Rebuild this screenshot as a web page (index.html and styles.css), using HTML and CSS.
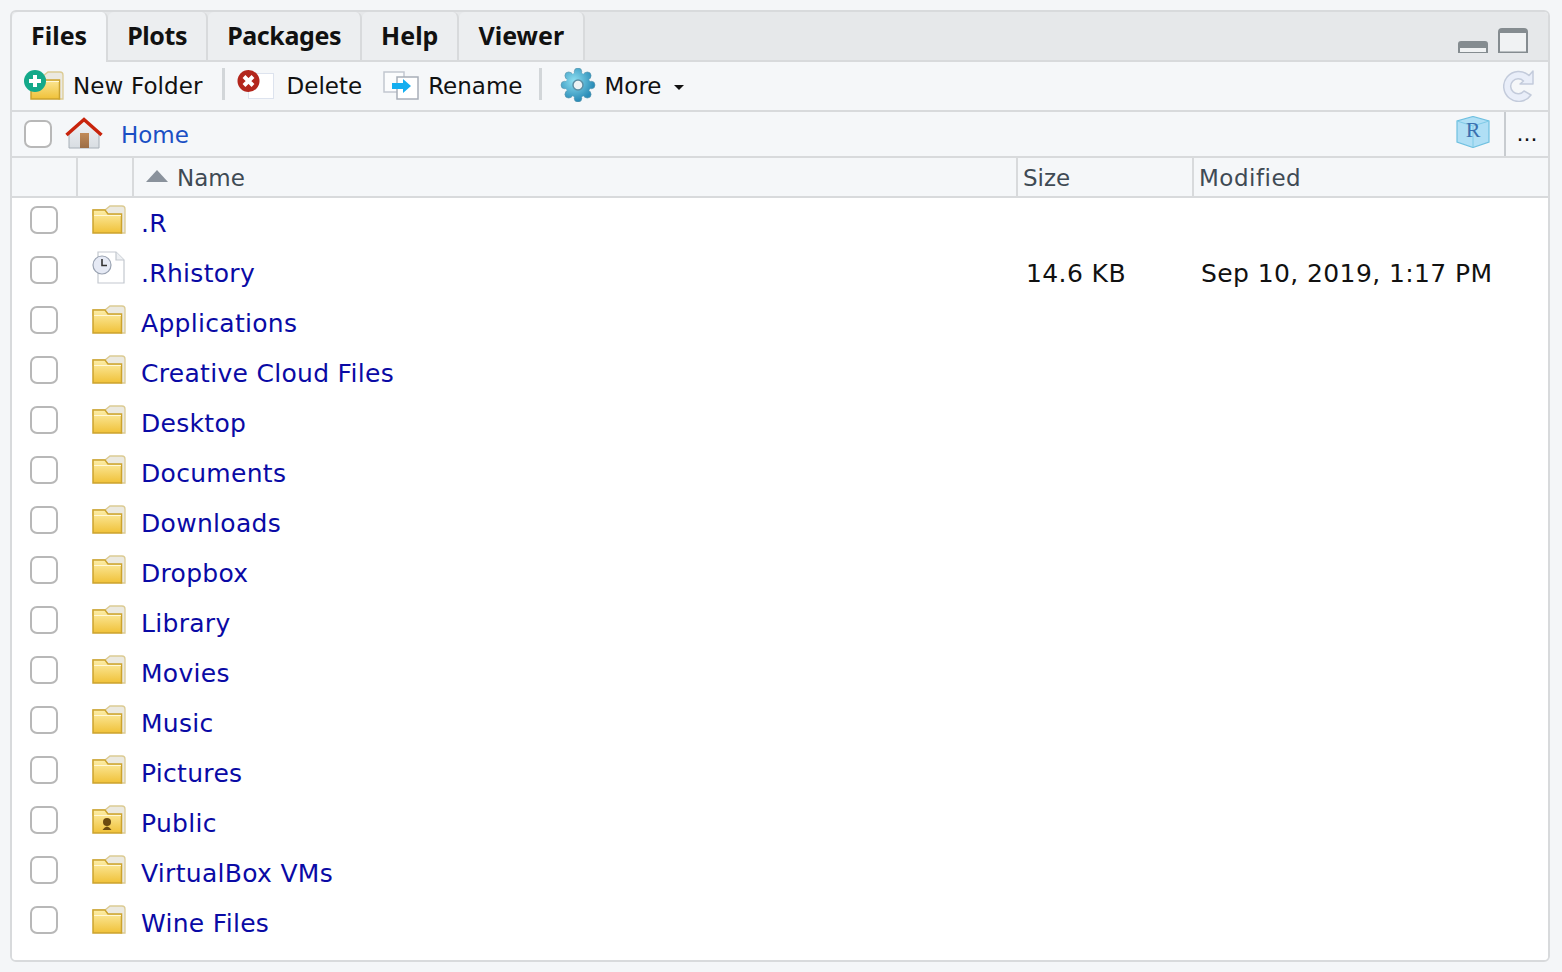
FILE: index.html
```html
<!DOCTYPE html>
<html lang="en">
<head>
    <meta charset="UTF-8">
    <title>Files</title>
    <link rel="stylesheet" href="styles.css">
</head>
<body>
    <svg class="defs" width="0" height="0">
        <defs>
            <linearGradient id="fold" x1="0" y1="0" x2="0" y2="1">
                <stop offset="0" stop-color="#fdeea8"/>
                <stop offset="1" stop-color="#f0c138"/>
            </linearGradient>
            <symbol id="folder" viewBox="0 0 34 29">
                <path d="M1 5 H13 L18 1 H30 Q33 1 33 4 V28 H29 V10 H1 Z" fill="#ebe9e0" stroke="#dccb92" stroke-width="1.3"/>
                <path d="M1 5 H13 L16 9 H29.500 V28 H1 Z" fill="url(#fold)" stroke="#cba32e" stroke-width="1.5"/>
                <path d="M2 10.500 H29" stroke="#fff8d8" stroke-width="1"/>
            </symbol>
        </defs>
    </svg>

    <div class="panel">
        <div class="tabs">
            <div class="tab active">Files</div>
            <div class="tab tab-tight">Plots</div>
            <div class="tab tab-tight">Packages</div>
            <div class="tab">Help</div>
            <div class="tab">Viewer</div>
            <div class="win-btns">
                <svg width="30" height="12" viewBox="0 0 30 12"><path d="M0 12 V3 Q0 0 3 0 H27 Q30 0 30 3 V12 Z" fill="#858c90"/><rect x="2" y="7" width="26" height="4" fill="#f0f2f3"/></svg>
                <svg width="30" height="25" viewBox="0 0 30 25"><path d="M0 25 V4 Q0 0 4 0 H26 Q30 0 30 4 V25 Z" fill="#858c90"/><rect x="2" y="5" width="26" height="18.500" fill="#f0f2f3"/></svg>
            </div>
        </div>

        <div class="toolbar">
            <button class="tool tool-new">
                <svg width="42" height="30" viewBox="0 0 42 30">
                    <use href="#folder" x="6" y="1" width="34" height="29"/>
                    <circle cx="11" cy="11" r="11" fill="#14a98a"/>
                    <path d="M11 5 V17 M5 11 H17" stroke="#fff" stroke-width="4"/>
                </svg>
                New Folder
            </button>
            <span class="tool-sep sep-a"></span>
            <button class="tool tool-del">
                <svg width="38" height="30" viewBox="0 0 38 30">
                    <rect x="11.500" y="3.500" width="25" height="25" fill="#fff" stroke="#dde3ee" stroke-width="1"/>
                    <circle cx="11.500" cy="11" r="11" fill="#b3261c"/>
                    <path d="M7 6.500 L16 15.500 M16 6.500 L7 15.500" stroke="#fff" stroke-width="4"/>
                </svg>
                Delete
            </button>
            <button class="tool tool-ren">
                <svg width="36" height="30" viewBox="0 0 36 30">
                    <rect x="1" y="2" width="20" height="20" fill="#fbfcfd" stroke="#c2c7d0" stroke-width="1.5"/>
                    <rect x="14" y="7" width="21" height="22" fill="#fff" stroke="#a8aeb8" stroke-width="1.5"/>
                    <path d="M9 13 H20 V9 L28 16 L20 23 V19 H9 Z" fill="#14aef0"/>
                </svg>
                Rename
            </button>
            <span class="tool-sep sep-b"></span>
            <button class="tool tool-more">
                <svg width="36" height="34" viewBox="0 0 36 34">
                    <defs>
                        <radialGradient id="gear" gradientUnits="userSpaceOnUse" cx="14" cy="13" r="20">
                            <stop offset="0" stop-color="#8fe0f2"/>
                            <stop offset="1" stop-color="#2b8db8"/>
                        </radialGradient>
                    </defs>
                    <g fill="url(#gear)" stroke="#5a93ab" stroke-width="0.6">
                        <circle cx="18" cy="3.800" r="3.800"/>
                        <circle cx="18" cy="30.200" r="3.800"/>
                        <circle cx="4.800" cy="17" r="3.800"/>
                        <circle cx="31.200" cy="17" r="3.800"/>
                        <circle cx="8.700" cy="7.700" r="3.800"/>
                        <circle cx="27.300" cy="7.700" r="3.800"/>
                        <circle cx="8.700" cy="26.300" r="3.800"/>
                        <circle cx="27.300" cy="26.300" r="3.800"/>
                    </g>
                    <circle cx="18" cy="17" r="12.500" fill="url(#gear)"/>
                    <circle cx="18" cy="17" r="5" fill="#eef2f4" stroke="#5d8ea4" stroke-width="1.500"/>
                </svg>
                More
                <span class="caret"></span>
            </button>
            <svg class="refresh" width="32" height="32" viewBox="0 0 32 32">
                <path d="M30 1 V14 H17 L20.500 11 A7.500 7.500 0 1 0 21 21 L28 25 A15 15 0 1 1 26 5.500 Z" fill="#e9eef9" stroke="#c3cbdb" stroke-width="1.500" stroke-linejoin="round"/>
            </svg>
        </div>

        <div class="pathbar">
            <span class="check"></span>
            <svg class="house" width="38" height="34" viewBox="0 0 38 34">
                <defs>
                    <linearGradient id="wall" x1="0" y1="0" x2="0" y2="1">
                        <stop offset="0" stop-color="#f2f4f6"/>
                        <stop offset="1" stop-color="#d8dde2"/>
                    </linearGradient>
                    <linearGradient id="door" x1="0" y1="0" x2="0" y2="1">
                        <stop offset="0" stop-color="#c08a58"/>
                        <stop offset="1" stop-color="#9c6e46"/>
                    </linearGradient>
                </defs>
                <path d="M4 15 L19 2 L34 15 V31 H4 Z" fill="url(#wall)" stroke="#a8b0b8" stroke-width="1"/>
                <rect x="15" y="16" width="9" height="15" fill="url(#door)"/>
                <path d="M1.500 18 L19 2.500 L36.500 18" fill="none" stroke="#c8240c" stroke-width="3.500"/>
            </svg>
            <a class="home-link">Home</a>
            <svg class="rcube" width="34" height="32" viewBox="0 0 34 32">
                <path d="M17 0.500 L33 5 V26 L17 31.500 L1 26 V5 Z" fill="#b0dff5" stroke="#6fc0e0" stroke-width="1.200"/>
                <path d="M1 5 L17 10 L33 5 M17 10 V31" fill="none" stroke="#7fcae6" stroke-width="1"/>
                <text x="17" y="21" class="rcube-r">R</text>
            </svg>
            <span class="path-more">...</span>
        </div>

        <div class="thead">
            <div class="th"></div>
            <div class="th"></div>
            <div class="th th-name"><span class="sort-up"></span>Name</div>
            <div class="th th-size">Size</div>
            <div class="th th-mod">Modified</div>
        </div>

        <div class="rows">
            <div class="row"><span class="check"></span><svg class="ficon"><use href="#folder"/></svg><a class="fname">.R</a></div>
            <div class="row">
                <span class="check"></span>
                <svg class="ficon ficon-hist" viewBox="0 0 34 33">
                    <path d="M6 1 H24 L32 9 V32 H6 Z" fill="#fff" stroke="#c3c8cf" stroke-width="1.200"/>
                    <path d="M24 1 V9 H32" fill="#eef0f3" stroke="#c3c8cf" stroke-width="1.200"/>
                    <circle cx="10" cy="14" r="9" fill="#e6eaf5" stroke="#9aa3b2" stroke-width="1.200"/>
                    <path d="M10 8 V14.500 H15" fill="none" stroke="#333" stroke-width="1.600"/>
                </svg>
                <a class="fname">.Rhistory</a>
                <span class="fsize">14.6 KB</span>
                <span class="fmod">Sep 10, 2019, 1:17 PM</span>
            </div>
            <div class="row"><span class="check"></span><svg class="ficon"><use href="#folder"/></svg><a class="fname">Applications</a></div>
            <div class="row"><span class="check"></span><svg class="ficon"><use href="#folder"/></svg><a class="fname">Creative Cloud Files</a></div>
            <div class="row"><span class="check"></span><svg class="ficon"><use href="#folder"/></svg><a class="fname">Desktop</a></div>
            <div class="row"><span class="check"></span><svg class="ficon"><use href="#folder"/></svg><a class="fname">Documents</a></div>
            <div class="row"><span class="check"></span><svg class="ficon"><use href="#folder"/></svg><a class="fname">Downloads</a></div>
            <div class="row"><span class="check"></span><svg class="ficon"><use href="#folder"/></svg><a class="fname">Dropbox</a></div>
            <div class="row"><span class="check"></span><svg class="ficon"><use href="#folder"/></svg><a class="fname">Library</a></div>
            <div class="row"><span class="check"></span><svg class="ficon"><use href="#folder"/></svg><a class="fname">Movies</a></div>
            <div class="row"><span class="check"></span><svg class="ficon"><use href="#folder"/></svg><a class="fname">Music</a></div>
            <div class="row"><span class="check"></span><svg class="ficon"><use href="#folder"/></svg><a class="fname">Pictures</a></div>
            <div class="row">
                <span class="check"></span>
                <svg class="ficon" viewBox="0 0 34 29">
                    <use href="#folder" width="34" height="29"/>
                    <circle cx="15" cy="17" r="4" fill="#6b4a10"/>
                    <path d="M10.500 25 Q15 18 19.500 25 Z" fill="#6b4a10"/>
                </svg>
                <a class="fname">Public</a>
            </div>
            <div class="row"><span class="check"></span><svg class="ficon"><use href="#folder"/></svg><a class="fname">VirtualBox VMs</a></div>
            <div class="row"><span class="check"></span><svg class="ficon"><use href="#folder"/></svg><a class="fname">Wine Files</a></div>
        </div>
    </div>
</body>
</html>
```

FILE: styles.css
```css
* {
    box-sizing: border-box;
}

body {
    margin: 0;
    padding: 10px 12px 10px 10px;
    height: 972px;
    overflow: hidden;
    background-color: #f4f6f8;
    font-family: "DejaVu Sans", "Liberation Sans", sans-serif;
    font-size: 23px;
    color: #111;
}

.defs {
    position: absolute;
}

.panel {
    height: 952px;
    border: 2px solid #d8dadc;
    border-radius: 6px;
    display: flex;
    flex-direction: column;
    background-color: #fff;
    overflow: hidden;
}

.tabs {
    height: 50px;
    display: flex;
    align-items: flex-start;
    background-color: #e6e8ea;
    border-bottom: 2px solid #d8dadc;
    font-family: "Noto Sans", sans-serif;
    font-size: 25px;
    font-weight: bold;
}

.tab {
    height: 48px;
    padding: 0 19px 3px;
    display: flex;
    align-items: center;
    background-color: #eceef0;
    border-right: 2px solid #d8dadc;
    border-radius: 6px 6px 0 0;
}

.tab-tight {
    letter-spacing: -0.4px;
}

.tab.active {
    height: 50px;
    padding-bottom: 5px;
    position: relative;
    background-color: #f5f7f9;
}

.win-btns {
    margin-left: auto;
    align-self: stretch;
    display: flex;
    align-items: flex-end;
    gap: 10px;
    padding: 0 20px 7px 0;
}

.toolbar {
    height: 50px;
    display: flex;
    align-items: center;
    background-color: #f5f7f9;
    border-bottom: 2px solid #d8dadc;
    padding-left: 12px;
}

.tool {
    border: none;
    background: none;
    padding: 0;
    font: inherit;
    color: inherit;
    display: flex;
    align-items: center;
}

.tool svg {
    margin-top: -3px;
}

.tool-new {
    letter-spacing: 0.1px;
}

.tool-new svg { margin-right: 7px; }
.tool-del svg { margin-right: 12px; }
.tool-ren svg { margin-right: 9px; }
.tool-more svg { margin-right: 8px; }

.tool-sep {
    width: 3px;
    height: 32px;
    margin-top: -4px;
    background-color: #d2d6d9;
}

.sep-a { margin-left: 19px; margin-right: 12px; }
.sep-b { margin-left: 17px; margin-right: 18px; }
.tool-ren { margin-left: 21px; }

.caret {
    margin-left: 12px;
    margin-top: 3px;
    border: 5px solid transparent;
    border-top-color: #111;
    border-bottom-width: 0;
}

.refresh {
    margin-left: auto;
    margin-right: 13px;
}

.pathbar {
    height: 46px;
    display: flex;
    align-items: center;
    background-color: #f5f7f9;
    border-bottom: 2px solid #d8dadc;
    padding-left: 12px;
}

.check {
    flex: none;
    width: 28px;
    height: 28px;
    background-color: #fff;
    border: 2px solid #b8b8b8;
    border-radius: 7px;
}

.house {
    margin-left: 13px;
}

.home-link {
    margin-left: 18px;
    margin-top: 2px;
    color: #1a4fc4;
}

.rcube {
    margin-left: auto;
    margin-right: 14px;
    margin-top: -4px;
}

.rcube-r {
    font-family: "Liberation Serif", serif;
    font-size: 22px;
    fill: #3a70b0;
    text-anchor: middle;
}

.path-more {
    align-self: stretch;
    width: 44px;
    border-left: 2px solid #c8ccd0;
    text-align: center;
    font-size: 22px;
    line-height: 44px;
}

.thead {
    height: 40px;
    display: grid;
    grid-template-columns: 66px 56px 884px 176px 1fr;
    background-color: #f5f7f9;
    border-bottom: 2px solid #d8dadc;
    color: #3f4a54;
}

.th {
    display: flex;
    align-items: center;
    border-right: 2px solid #d8dadc;
    padding-left: 5px;
    padding-top: 1px;
}

.th-mod {
    border-right: none;
    letter-spacing: 0.5px;
}

.th-name {
    padding-left: 12px;
}

.sort-up {
    width: 0;
    height: 0;
    margin-right: 9px;
    border: 11px solid transparent;
    border-top-width: 0;
    border-bottom: 12px solid #8a929c;
    position: relative;
    top: -2px;
}

.rows {
    flex: 1;
    background-color: #fff;
    font-size: 25px;
}

.row {
    height: 50px;
    display: flex;
    align-items: center;
    padding-left: 18px;
}

.row .check {
    margin-top: -6px;
}

.ficon {
    flex: none;
    width: 34px;
    height: 29px;
    margin-left: 34px;
    margin-top: -8px;
}

.ficon-hist {
    height: 33px;
    margin-top: -11px;
}

.fname {
    margin-left: 15px;
    color: #0a0aa5;
    width: 885px;
    letter-spacing: 0.3px;
}

.fsize {
    width: 175px;
    letter-spacing: 0.4px;
}

.fmod {
    white-space: nowrap;
    letter-spacing: 0.4px;
}
```
